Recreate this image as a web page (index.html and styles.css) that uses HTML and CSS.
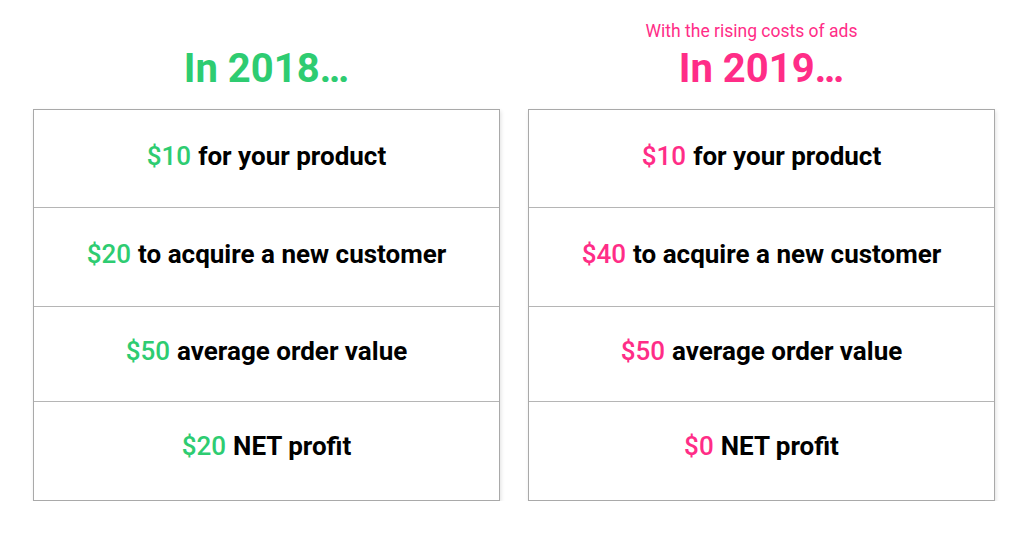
FILE: index.html
```html
<!DOCTYPE html>
<html lang="en">
<head>
<meta charset="utf-8">
<title>2018 vs 2019</title>
<link rel="stylesheet" href="styles.css">
</head>
<body>
<main class="compare">
  <section class="col green">
    <header class="col-head">
      <h2 class="year">In 2018…</h2>
    </header>
    <div class="card">
      <div class="row"><span class="amt">$10</span> for your product</div>
      <div class="row"><span class="amt">$20</span> to acquire a new customer</div>
      <div class="row short"><span class="amt">$50</span> average order value</div>
      <div class="row last"><span class="amt">$20</span> NET profit</div>
    </div>
  </section>
  <section class="col pink">
    <header class="col-head">
      <p class="sub">With the rising costs of ads</p>
      <h2 class="year">In 2019…</h2>
    </header>
    <div class="card">
      <div class="row"><span class="amt">$10</span> for your product</div>
      <div class="row"><span class="amt">$40</span> to acquire a new customer</div>
      <div class="row short"><span class="amt">$50</span> average order value</div>
      <div class="row last"><span class="amt">$0</span> NET profit</div>
    </div>
  </section>
</main>
</body>
</html>
```
FILE: styles.css
```css
html, body {
  margin: 0;
  padding: 0;
  background: #ffffff;
}
body {
  font-family: Roboto, "Liberation Sans", Arial, sans-serif;
  color: #000;
}
.compare {
  display: flex;
  gap: 28px;
  padding-left: 33px;
}
.col {
  width: 467px;
  display: flex;
  flex-direction: column;
}
.green { --accent: #2ecc71; }
.pink { --accent: #ff2d87; }
.col-head {
  height: 109px;
  box-sizing: border-box;
  display: flex;
  flex-direction: column;
  justify-content: flex-end;
  align-items: center;
  padding-bottom: 20px;
}
.year {
  margin: 0;
  font-size: 40px;
  line-height: 40px;
  font-weight: 700;
  color: var(--accent);
}
.sub {
  margin: 0 20px 8px 0;
  font-size: 17.5px;
  line-height: 20px;
  color: var(--accent);
}
.card {
  border: 1px solid #a9a9a9;
  box-shadow: 1px 2px 4px rgba(0, 0, 0, 0.12);
  background: #fff;
}
.row {
  height: 99px;
  box-sizing: border-box;
  padding-bottom: 6px;
  display: flex;
  align-items: center;
  justify-content: center;
  gap: 0.27em;
  font-size: 26px;
  font-weight: 700;
  border-top: 1px solid #b5b5b5;
}
.row:first-child {
  border-top: none;
  height: 97px;
}
.row.short {
  height: 95px;
}
.row.last {
  padding-bottom: 10px;
}
.amt {
  color: var(--accent);
  font-weight: 500;
}
```
